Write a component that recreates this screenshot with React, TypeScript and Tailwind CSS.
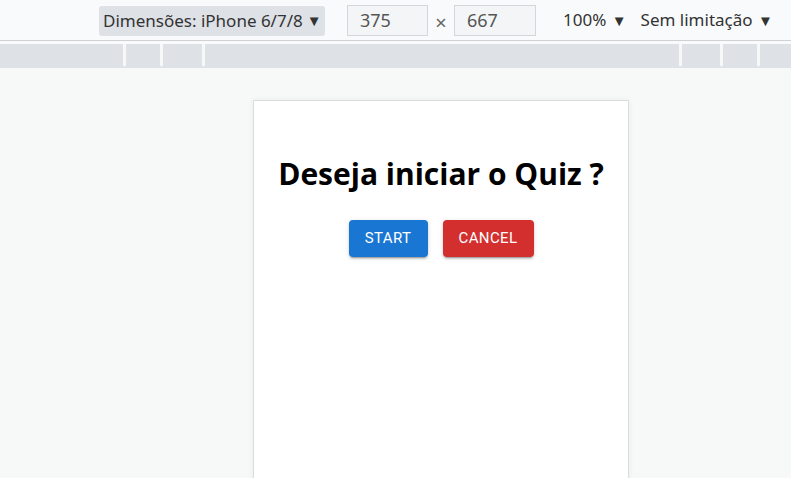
export default function App() {
  return (
    <div className="w-[791px] h-[478px] overflow-hidden bg-[#f7f8f8] flex flex-col" style={{ fontFamily: '"Noto Sans", "Open Sans", sans-serif' }}>
      <div className="h-[41px] shrink-0 bg-[#f9fafb] border-b border-[#cfd1d5] flex items-center text-[#333] text-[17px]">
        <div className="ml-[99px] w-[226px] h-[30px] mt-[1px] rounded-[3px] bg-[#dee1e6] flex items-center pl-[4px]">
          Dimensões: iPhone 6/7/8 <span className="ml-[4px] text-[15px]">▼</span>
        </div>
        <div className="ml-[22px] w-[81px] h-[31px] border border-[#d4d6d9] bg-[#f4f5f6] flex items-center pl-[12px] text-[#555] text-[18px]">375</div>
        <span className="w-[26px] text-center mt-[5px] text-[#666] text-[20px]">×</span>
        <div className="w-[82px] h-[31px] border border-[#d4d6d9] bg-[#f4f5f6] flex items-center pl-[12px] text-[#555] text-[18px]">667</div>
        <div className="ml-[27px]">100% <span className="ml-[1px] text-[15px]">▼</span></div>
        <div className="ml-[14px]">Sem limitação <span className="ml-[1px] text-[15px]">▼</span></div>
      </div>
      <div className="h-[3px] shrink-0 bg-[#f9fafb]" />
      <div className="h-[24px] shrink-0 bg-[#dee1e6] flex flex-col">
        <div className="h-[22px] flex bg-[#f7f8f8] gap-[3px]">
          <div className="w-[123px] bg-[#dee1e6]" />
          <div className="w-[34px] bg-[#dee1e6]" />
          <div className="w-[39px] bg-[#dee1e6]" />
          <div className="w-[474px] bg-[#dee1e6]" />
          <div className="w-[38px] bg-[#dee1e6]" />
          <div className="w-[34px] bg-[#dee1e6]" />
          <div className="flex-1 bg-[#dee1e6]" />
        </div>
      </div>
      <div className="flex-1 pt-[32px]">
        <div className="ml-[253px] w-[376px] h-[400px] bg-white border border-[#dcdcdc] shadow-[0_0_6px_rgba(0,0,0,0.06)] flex flex-col items-center">
          <h1 className="mt-[54px] text-[30px] leading-[38px] font-bold text-black" style={{ fontFamily: '"Open Sans", sans-serif' }}>
            Deseja iniciar o Quiz ?
          </h1>
          <div className="mt-[27px] flex gap-[15px]" style={{ fontFamily: 'Roboto, sans-serif' }}>
            <button className="h-[37px] w-[79px] rounded-[4px] bg-[#1976d2] text-white text-[15px] font-normal tracking-[0.4px] shadow-[0_3px_1px_-2px_rgba(0,0,0,0.2),0_2px_2px_0_rgba(0,0,0,0.14),0_1px_5px_0_rgba(0,0,0,0.12)]">
              START
            </button>
            <button className="h-[37px] w-[91px] rounded-[4px] bg-[#d32f2f] text-white text-[15px] font-normal tracking-[0.4px] shadow-[0_3px_1px_-2px_rgba(0,0,0,0.2),0_2px_2px_0_rgba(0,0,0,0.14),0_1px_5px_0_rgba(0,0,0,0.12)]">
              CANCEL
            </button>
          </div>
        </div>
      </div>
    </div>
  );
}
